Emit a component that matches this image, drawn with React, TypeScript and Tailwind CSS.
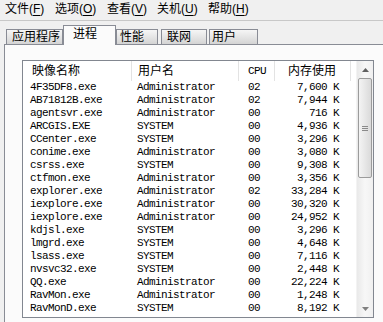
import React from "react";

const rows: [string, string, string, string][] = [
  ["4F35DF8.exe", "Administrator", "02", "7,600 K"],
  ["AB71812B.exe", "Administrator", "02", "7,944 K"],
  ["agentsvr.exe", "Administrator", "00", "716 K"],
  ["ARCGIS.EXE", "SYSTEM", "00", "4,936 K"],
  ["CCenter.exe", "SYSTEM", "00", "3,296 K"],
  ["conime.exe", "Administrator", "00", "3,080 K"],
  ["csrss.exe", "SYSTEM", "00", "9,308 K"],
  ["ctfmon.exe", "Administrator", "00", "3,356 K"],
  ["explorer.exe", "Administrator", "02", "33,284 K"],
  ["iexplore.exe", "Administrator", "00", "30,320 K"],
  ["iexplore.exe", "Administrator", "00", "24,952 K"],
  ["kdjsl.exe", "SYSTEM", "00", "3,296 K"],
  ["lmgrd.exe", "SYSTEM", "00", "4,648 K"],
  ["lsass.exe", "SYSTEM", "00", "7,116 K"],
  ["nvsvc32.exe", "SYSTEM", "00", "2,448 K"],
  ["QQ.exe", "Administrator", "00", "22,224 K"],
  ["RavMon.exe", "Administrator", "00", "1,248 K"],
  ["RavMonD.exe", "SYSTEM", "00", "8,192 K"],
];

function MenuItem({ label, k, w }: { label: string; k: string; w: string }) {
  return (
    <span className={`${w} shrink-0 whitespace-nowrap`}>
      {label}(<span className="underline underline-offset-2">{k}</span>)
    </span>
  );
}

export default function App() {
  const inactive =
    "h-[15px] shrink-0 border border-b-0 border-[#898c95] bg-linear-to-b from-[#f6f6f6] to-[#d4d4d4] flex items-center text-[12px] leading-none whitespace-nowrap";
  return (
    <div className="w-[383px] h-[322px] overflow-hidden bg-[#f0f0f0] text-black flex flex-col font-['Liberation_Sans','Noto_Sans_CJK_SC',sans-serif]">
      {/* menu bar */}
      <div className="h-[21px] shrink-0 flex items-center pl-[5px] pb-[3px] border-b border-[#c8c8c8] text-[12px] leading-none">
        <MenuItem label="文件" k="F" w="w-[50px]" />
        <MenuItem label="选项" k="O" w="w-[52px]" />
        <MenuItem label="查看" k="V" w="w-[50px]" />
        <MenuItem label="关机" k="U" w="w-[51px]" />
        <MenuItem label="帮助" k="H" w="w-[50px]" />
      </div>

      {/* tabs */}
      <div className="h-[23px] shrink-0 flex items-end pl-[6px]">
        <div className={`${inactive} w-[57px] pl-[5px]`}>应用程序</div>
        <div className="relative z-10 h-[20px] -mb-px w-[53px] shrink-0 border border-b-0 border-[#898c95] bg-[#fbfbfb] flex items-center pl-[9px] pb-[3px] text-[12px] leading-none">
          进程
        </div>
        <div className={`${inactive} w-[42px] pl-[3px]`}>性能</div>
        <div className={`${inactive} ml-[3px] w-[46px] pl-[5px]`}>联网</div>
        <div className={`${inactive} ml-[2px] w-[49px] pl-[2px]`}>用户</div>
      </div>

      {/* panel */}
      <div className="ml-[4px] w-[420px] flex-1 border-l border-t border-[#898c95] bg-[#fbfbfb] pl-[17px] pt-[15px]">
        <div className="w-[352px] h-[258px] border border-[#828790] bg-white flex">
          <div className="w-[333px] flex flex-col overflow-hidden">
            {/* header */}
            <div className="h-[20px] shrink-0 flex text-[12px] leading-none">
              <div className="w-[109px] border-r border-[#e3e3e3] flex items-center pl-[9px]">映像名称</div>
              <div className="w-[107px] border-r border-[#e3e3e3] flex items-center pl-[6px]">用户名</div>
              <div className="w-[36px] border-r border-[#e3e3e3] flex items-center pl-[9px] font-['Liberation_Mono',monospace] text-[11px] tracking-[-0.6px]">
                CPU
              </div>
              <div className="w-[76px] border-r border-[#e3e3e3] flex items-center justify-end pr-[14px]">内存使用</div>
            </div>
            {/* rows */}
            <div className="font-['Liberation_Mono',monospace] text-[11px] tracking-[-0.6px] leading-[13px]">
              {rows.map((r, i) => (
                <div key={i} className="h-[13px] flex whitespace-nowrap">
                  <div className="w-[109px] pl-[7px]">{r[0]}</div>
                  <div className="w-[107px] pl-[5px]">{r[1]}</div>
                  <div className="w-[36px] pl-[9px]">{r[2]}</div>
                  <div className="w-[76px] pr-[12px] text-right">{r[3]}</div>
                </div>
              ))}
            </div>
          </div>
          {/* scrollbar */}
          <div className="w-[17px] flex flex-col bg-linear-to-r from-[#e9e9e9] via-[#f7f7f7] to-[#f0f0f0] border-l border-[#f3f3f3]">
            <div className="h-[17px] shrink-0 flex items-center justify-center">
              <svg width="7" height="4" viewBox="0 0 7 4">
                <path d="M0 4 L3.5 0 L7 4 Z" fill="#606060" />
              </svg>
            </div>
            <div className="h-[100px] shrink-0 mx-[1px] rounded-[2px] border border-[#9b9b9b] bg-linear-to-r from-[#f4f4f4] to-[#dadada] flex items-center justify-center">
              <div className="flex flex-col gap-[1px]">
                <div className="w-[6px] h-px bg-[#8a8a8a]" />
                <div className="w-[6px] h-px bg-[#8a8a8a]" />
                <div className="w-[6px] h-px bg-[#8a8a8a]" />
              </div>
            </div>
            <div className="flex-1" />
            <div className="h-[17px] shrink-0 flex items-center justify-center">
              <svg width="7" height="4" viewBox="0 0 7 4">
                <path d="M0 0 L7 0 L3.5 4 Z" fill="#808080" />
              </svg>
            </div>
          </div>
        </div>
      </div>
    </div>
  );
}
